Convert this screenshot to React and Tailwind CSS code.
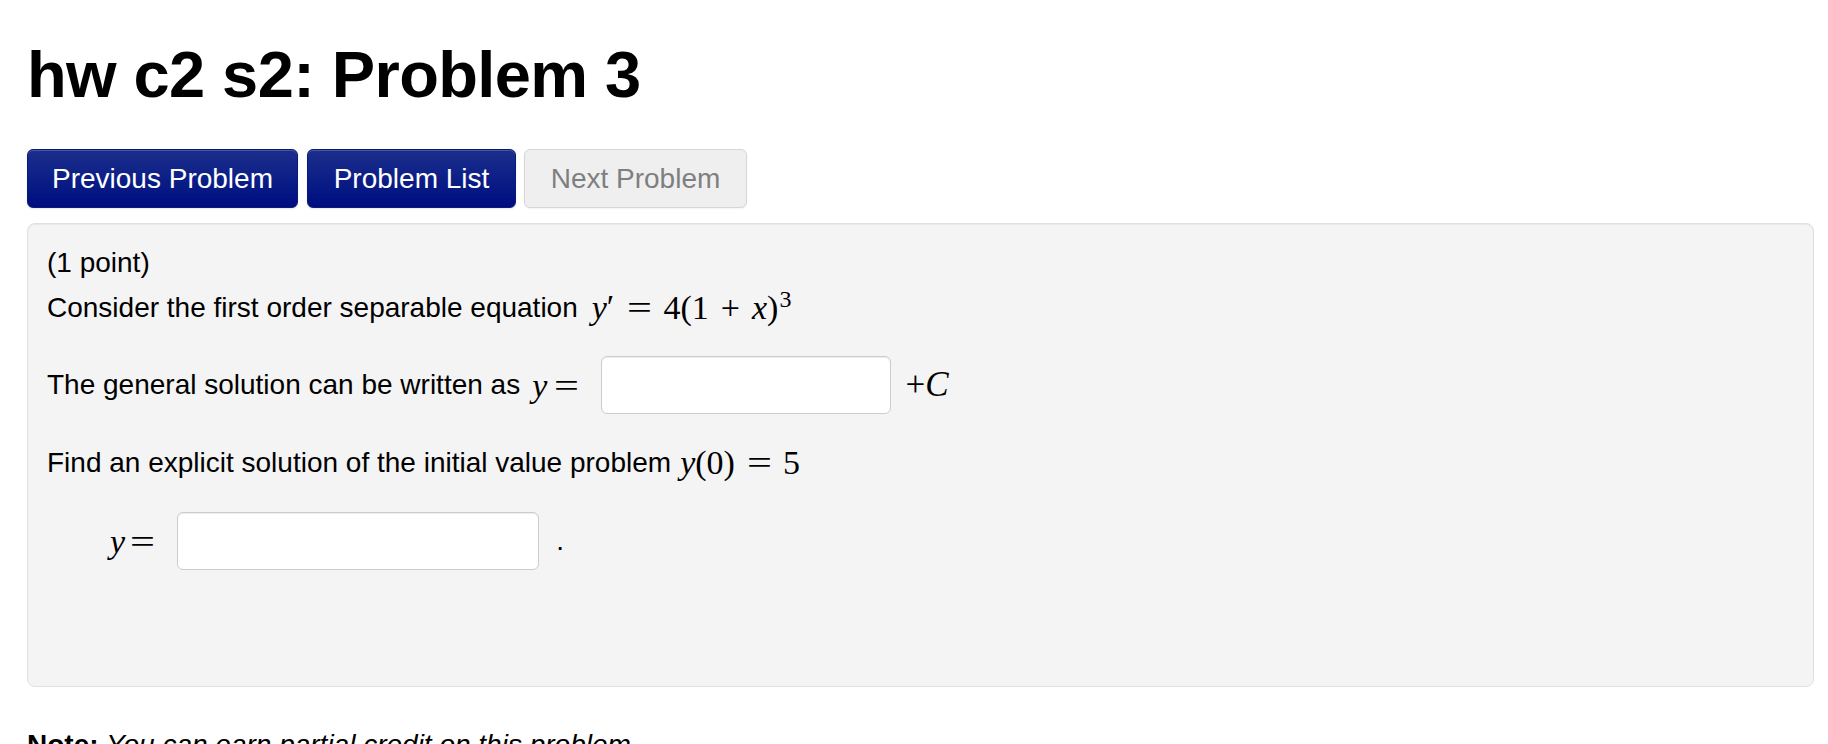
import React from 'react';

const sans = "font-['Liberation_Sans',Arial,sans-serif]";
const serif = "font-['Liberation_Serif','Times_New_Roman',serif]";

const NavButton = ({ label, width, disabled }) => (
    <button
        className={
            disabled
                ? `${width} h-[59px] rounded-[6px] border border-[#d6d6d6] bg-[#efefef] text-[28px] text-[#7f7f7f] shadow-[0_1px_2px_rgba(0,0,0,0.05)]`
                : `${width} h-[59px] rounded-[6px] border border-[#0a1a78] bg-gradient-to-b from-[#1c2d8c] to-[#000a80] text-[28px] text-white shadow-[inset_0_1px_0_rgba(255,255,255,0.2),0_1px_2px_rgba(0,0,0,0.1)]`
        }
    >
        {label}
    </button>
);

const AnswerBox = ({ width }) => (
    <input
        type="text"
        className={`${width} h-[58px] rounded-[6px] border border-[#cccccc] bg-white shadow-[inset_0_1px_1px_rgba(0,0,0,0.075)] outline-none`}
    />
);

// TeX-style wide equals sign
const Eq = ({ className = '' }) => (
    <span className={`inline-block scale-x-[1.3] ${className}`}>=</span>
);

export default function App() {
    return (
        <div className={`${sans} min-h-screen bg-white pl-[27px] pr-[14px] text-black`}>
            {/* title */}
            <h1 className="pt-[42px] text-[65px] font-bold leading-none tracking-[-0.6px]">hw c2 s2: Problem 3</h1>

            {/* nav */}
            <div className="mt-[42px] flex items-center">
                <NavButton label="Previous Problem" width="w-[271px]" />
                <div className="ml-[9px]">
                    <NavButton label="Problem List" width="w-[209px]" />
                </div>
                <div className="ml-[8px]">
                    <NavButton label="Next Problem" width="w-[223px]" disabled />
                </div>
            </div>

            {/* problem body */}
            <div className="mt-[15px] h-[464px] rounded-[8px] border border-[#e0e0e0] bg-[#f4f4f4] px-[19px] pt-[19px] shadow-[inset_0_1px_1px_rgba(0,0,0,0.05)] text-[28px]">
                <p className="h-[40px] leading-[40px]">(1 point)</p>
                <p className="mt-[5px] flex h-[40px] items-center leading-[40px]">
                    Consider the first order separable equation
                    <span className={`${serif} ml-[14px] text-[34px]`}>
                        <i>y</i>
                        <span className="relative -top-[1px]">′</span>
                        <Eq className="ml-[16px]" />
                        <span className="ml-[14px]">4(1</span>
                        <span className="mx-[12px]">+</span>
                        <i>x</i>
                        <span>)</span>
                        <sup className="ml-[1px] text-[24px]">3</sup>
                    </span>
                </p>

                <div className="mt-[28px] flex h-[58px] items-center">
                    <span>The general solution can be written as</span>
                    <span className={`${serif} ml-[12px] text-[34px]`}>
                        <i>y</i>
                        <Eq className="ml-[10px]" />
                    </span>
                    <div className="ml-[25px]">
                        <AnswerBox width="w-[290px]" />
                    </div>
                    <span className={`${serif} ml-[14px] text-[35px]`}>
                        +<i>C</i>
                    </span>
                </div>

                <p className="mt-[29px] flex h-[40px] items-center leading-[40px]">
                    Find an explicit solution of the initial value problem
                    <span className={`${serif} ml-[9px] text-[34px]`}>
                        <i>y</i>(0)
                        <Eq className="ml-[15px]" />
                        <span className="ml-[14px]">5</span>
                    </span>
                </p>

                <div className="mt-[29px] flex h-[58px] items-center pl-[63px]">
                    <span className={`${serif} text-[34px]`}>
                        <i>y</i>
                        <Eq className="ml-[8px]" />
                    </span>
                    <div className="ml-[25px]">
                        <AnswerBox width="w-[362px]" />
                    </div>
                    <span className="ml-[17px]">.</span>
                </div>
            </div>

            {/* note */}
            <p className="mt-[38px] text-[28px] leading-[40px]">
                <b>Note:</b> <i>You can earn partial credit on this problem.</i>
            </p>
        </div>
    );
}
